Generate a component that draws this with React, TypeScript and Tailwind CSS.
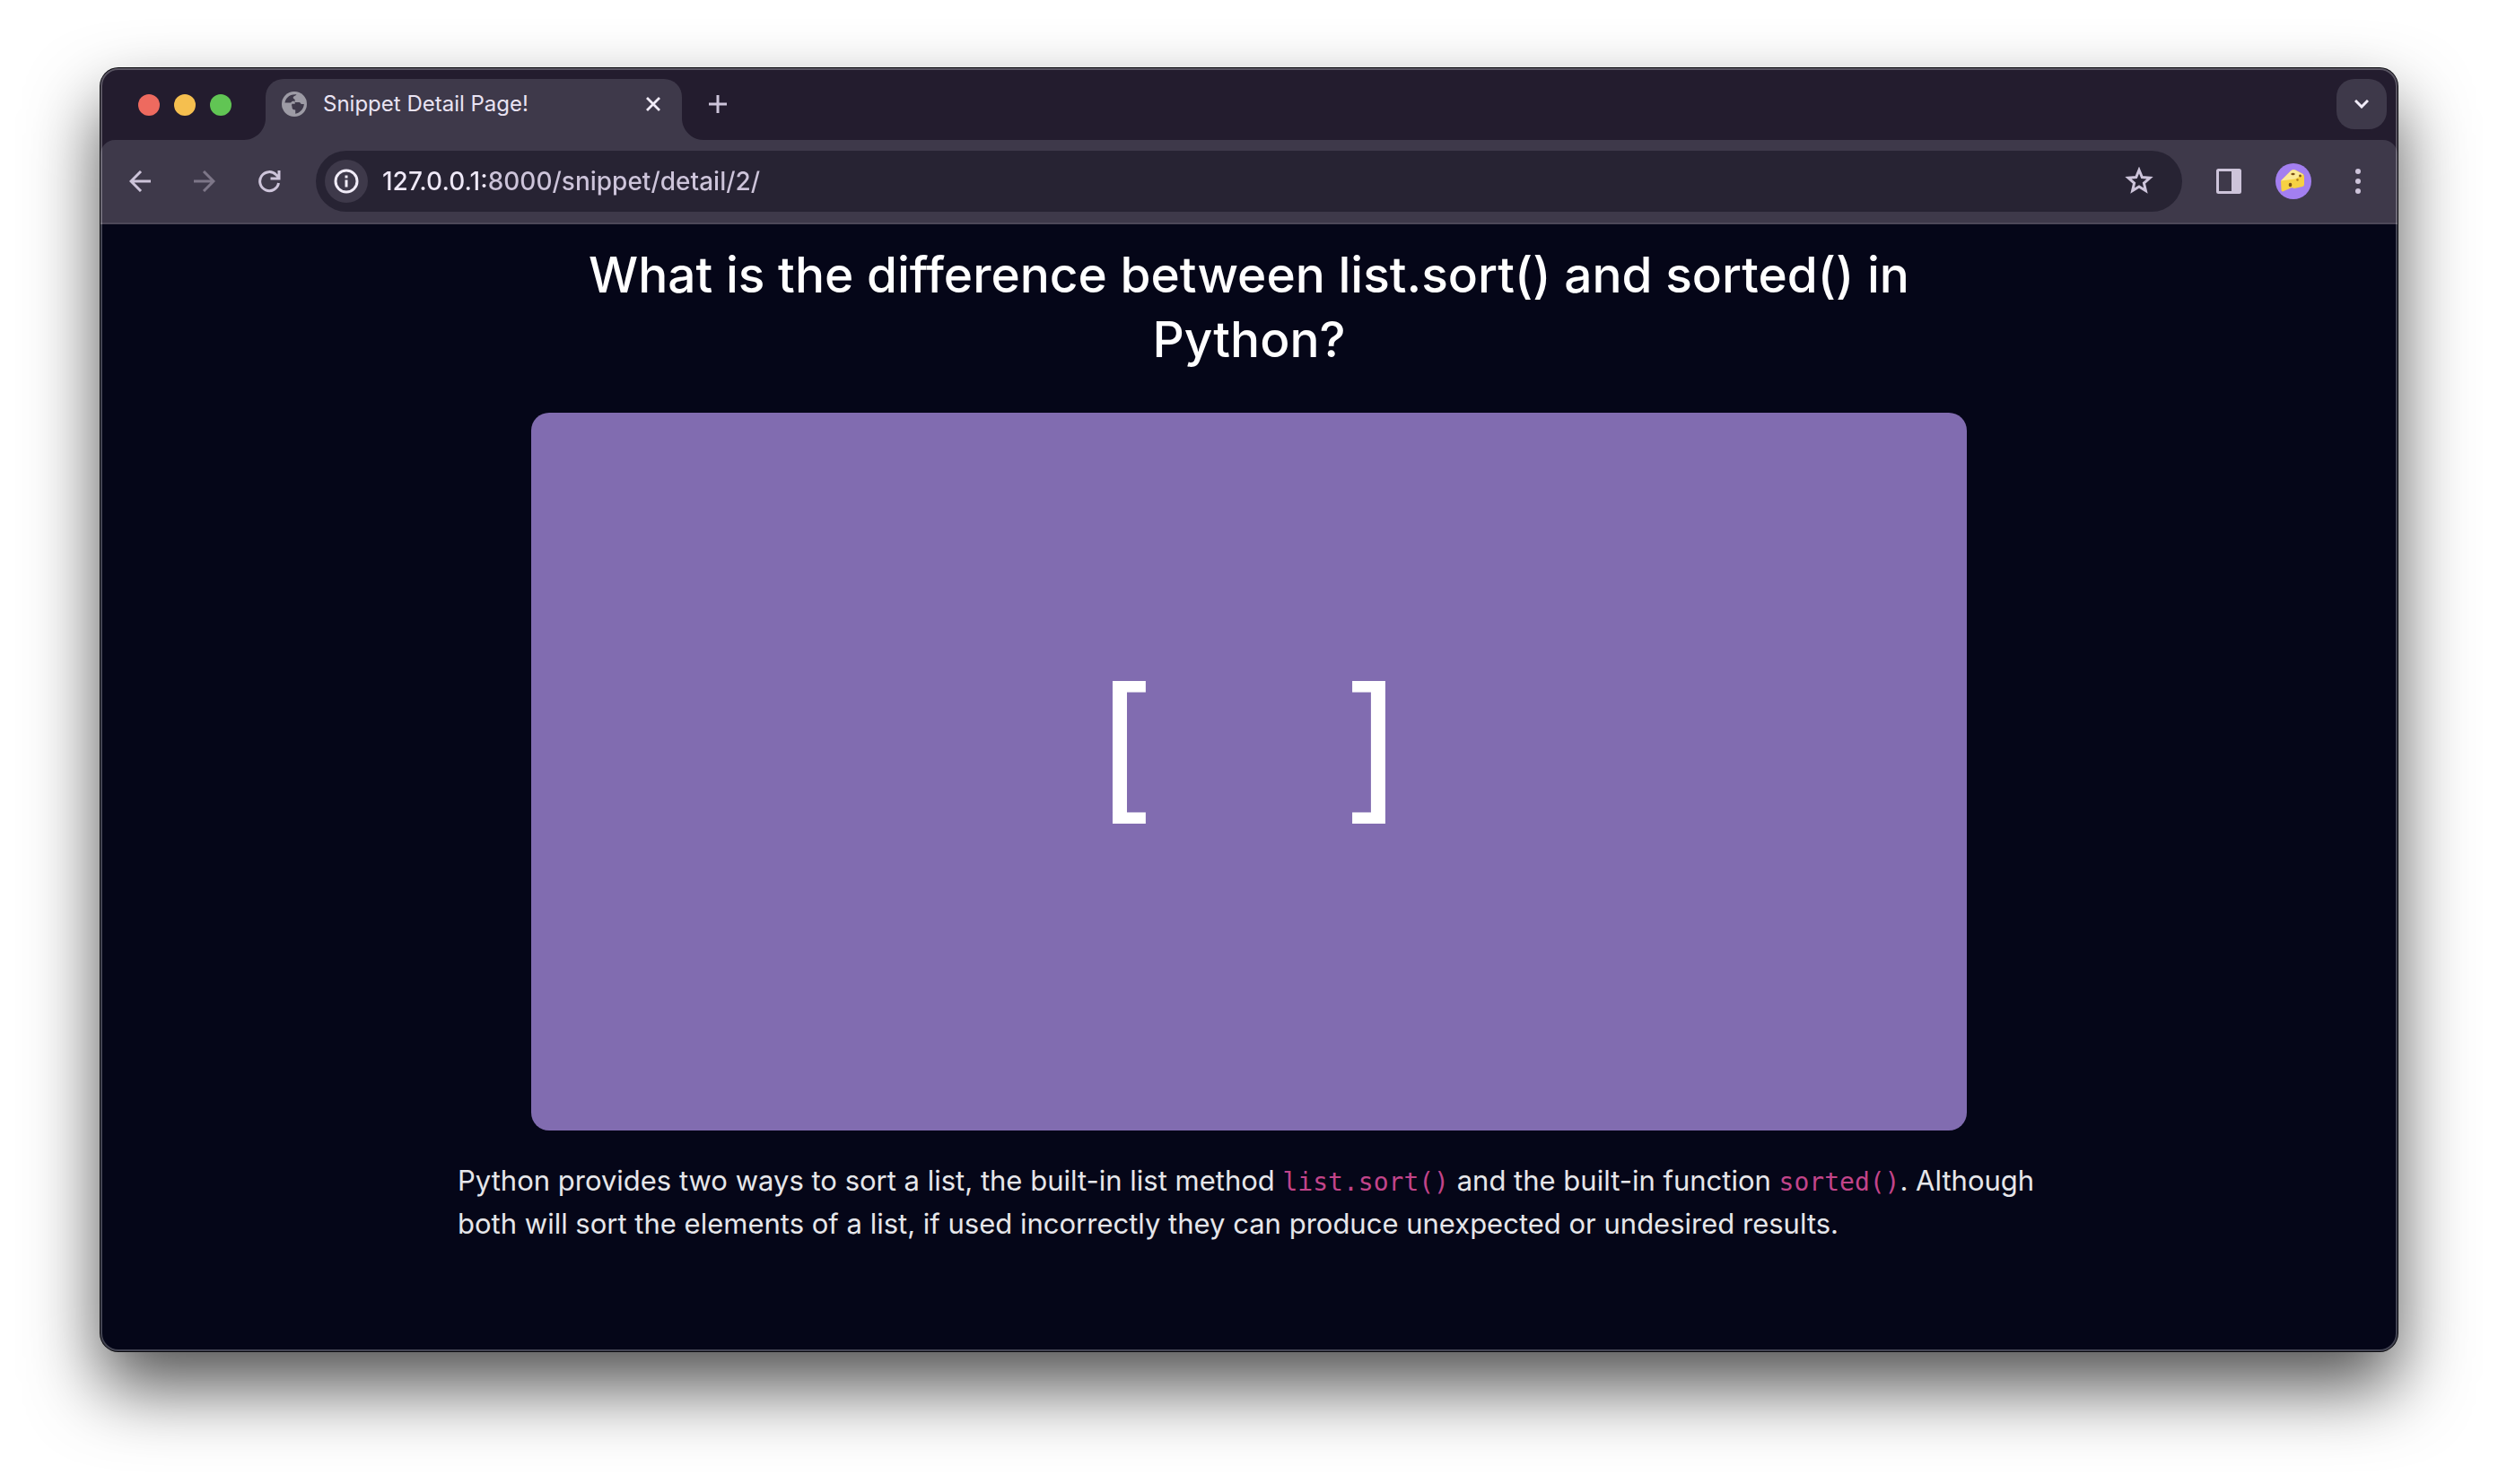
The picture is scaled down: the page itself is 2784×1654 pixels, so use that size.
import type { ReactNode } from "react";

const tools = "flex size-12 items-center justify-center rounded-full";

function IconButton({ label, children }: { label: string; children: ReactNode }) {
  return (
    <button type="button" aria-label={label} className={tools}>
      {children}
    </button>
  );
}

function GlobeIcon() {
  return (
    <svg viewBox="0 0 28 28" className="size-7 shrink-0" aria-hidden="true">
      <circle cx="14" cy="14" r="14" fill="#9d9ba5" />
      <path
        d="M16.500 3.300c-.6 1.700-3.800 1.500-3.800 3.700 0 1.600 2 1.100 2 2.600v2.400h4.500c1.800 0 1.800 2 3 2h2.600c-.2 5.500-4.400 9.800-9.600 10.700v-4.200c-2.600 0-3.700-1-3.700-3.200 0-1.700-.8-2.600-2.500-2.600H3.200C3.600 7.400 8.500 2.700 16.500 3.300z"
        fill="#3e394a"
      />
      <path d="M3 12.500h6.500c1.500 0 1.200-1.800 2.700-1.800h2.500v3h-3.500v2H3z" fill="#9d9ba5" />
    </svg>
  );
}

function CheeseIcon() {
  return (
    <svg viewBox="0 0 40 40" className="size-10" aria-hidden="true">
      <circle cx="20" cy="20" r="20" fill="#a37ff0" />
      <path d="M6 19.500 17 8.500q2-1.800 5-1l8 4q2 1 2 3v9q0 2-2 2.500l-9 2-3-1-3 1.500-7 3q-1.500 0-1.500-2z" fill="#f6d143" />
      <path d="M6 19.500 17 8.500q2-1.800 5-1l9 5-9 5z" fill="#fbe996" />
      <ellipse cx="19.500" cy="12" rx="2.200" ry="1.200" fill="#7a5014" />
      <circle cx="27.500" cy="14" r="1.400" fill="#7a5014" />
      <ellipse cx="16.500" cy="24" rx="1.800" ry="2.200" fill="#7a5014" />
      <circle cx="24.500" cy="18.500" r="1.200" fill="#a8741c" />
    </svg>
  );
}

function TabStrip() {
  return (
    <header className="flex h-20 items-end bg-[#231c2e] pr-3 pl-[42px]">
      <div className="flex h-[78px] items-center gap-4">
        <button type="button" aria-label="Close window" className="size-6 rounded-full bg-[#ee6a5f]" />
        <button type="button" aria-label="Minimise window" className="size-6 rounded-full bg-[#f5bf4f]" />
        <button type="button" aria-label="Zoom window" className="size-6 rounded-full bg-[#61c554]" />
      </div>
      <div className="ml-[14px] flex h-[68px] items-end">
        <svg viewBox="0 0 24 24" className="size-6 text-[#3e394a]" aria-hidden="true">
          <path d="M24 0v24H0C13 24 24 13 24 0z" fill="currentColor" />
        </svg>
        <div className="flex h-[68px] w-[464px] items-start rounded-t-[20px] bg-[#3e394a] pt-2 pr-2 pl-[18px]">
          <div className="flex h-10 flex-1 items-center gap-[18px]">
            <GlobeIcon />
            <span className="font-['Inter',sans-serif] text-[24px] leading-8 text-[#e9e3f3]">Snippet Detail Page!</span>
          </div>
          <button type="button" aria-label="Close tab" className="flex size-10 w-12 items-center justify-center">
            <svg viewBox="0 0 16 16" className="size-4" stroke="#f1ecf8" strokeWidth="2.800" aria-hidden="true">
              <path d="m1 1 14 14M15 1 1 15" />
            </svg>
          </button>
        </div>
        <svg viewBox="0 0 24 24" className="size-6 text-[#3e394a]" aria-hidden="true">
          <path d="M0 0v24h24C11 24 0 13 0 0z" fill="currentColor" />
        </svg>
      </div>
      <button type="button" aria-label="New tab" className="-ml-2 flex h-20 w-12 items-center justify-center">
        <svg viewBox="0 0 20 20" className="size-5" stroke="#cdc4da" strokeWidth="3" aria-hidden="true">
          <path d="M10 0v20M0 10h20" />
        </svg>
      </button>
      <button
        type="button"
        aria-label="Search tabs"
        className="mb-3 ml-auto flex size-14 items-center justify-center rounded-[20px] bg-[#3e394a]"
      >
        <svg viewBox="0 0 16 10" className="h-[10px] w-4" fill="none" stroke="#f1ecf8" strokeWidth="3" aria-hidden="true">
          <path d="m1 1 7 7 7-7" />
        </svg>
      </button>
    </header>
  );
}

function Toolbar() {
  return (
    <div className="bg-[#231c2e]">
      <nav
        aria-label="Browser toolbar"
        className="flex h-[94px] items-start rounded-t-2xl border-b-2 border-[#4d4858] bg-[#3e394a] px-5 pt-3"
      >
        <div className="flex h-[68px] items-center gap-6">
          <IconButton label="Back">
            <svg viewBox="0 0 24 24" className="size-6" fill="none" stroke="#cdc4da" strokeWidth="3" aria-hidden="true">
              <path d="M24 12H2M13 1 2 12l11 11" />
            </svg>
          </IconButton>
          <IconButton label="Forward">
            <svg viewBox="0 0 24 24" className="size-6" fill="none" stroke="#7d7688" strokeWidth="3" aria-hidden="true">
              <path d="M0 12h22M11 1l11 11-11 11" />
            </svg>
          </IconButton>
          <IconButton label="Reload">
            <svg viewBox="0 0 26 26" className="size-[26px]" fill="none" stroke="#cdc4da" strokeWidth="3" aria-hidden="true">
              <path d="M23.500 15a10.500 10.500 0 1 1-2.800-9.200L24 9M24 1v9h-9.500" />
            </svg>
          </IconButton>
        </div>
        <div className="ml-7 flex h-[68px] flex-1 items-center rounded-full bg-[#272333] pr-6 pl-[10px]">
          <button
            type="button"
            aria-label="View site information"
            className="flex size-12 items-center justify-center rounded-full bg-[#3e394a]"
          >
            <svg viewBox="0 0 28 28" className="size-7" fill="none" stroke="#f1ecf8" strokeWidth="3" aria-hidden="true">
              <circle cx="14" cy="14" r="12" />
              <path d="M14 12.500v8M14 7.500v3" />
            </svg>
          </button>
          <input
            aria-label="Address and search bar"
            defaultValue="127.0.0.1:8000/snippet/detail/2/"
            className="ml-4 min-w-0 flex-1 bg-[linear-gradient(90deg,#efe9f8_116px,#cdc4da_116px)] bg-clip-text font-['Inter',sans-serif] text-[28px] leading-10 font-medium text-transparent outline-none"
          />
          <IconButton label="Bookmark this tab">
            <svg viewBox="0 0 32 32" className="size-8" fill="none" stroke="#cdc4da" strokeWidth="3" aria-hidden="true">
              <path d="m16 3.500 3.300 8.100 8.700.7-6.600 5.700 2 8.500-7.400-4.500-7.400 4.500 2-8.500L4 12.300l8.700-.7z" />
            </svg>
          </IconButton>
        </div>
        <div className="ml-7 flex h-[68px] items-center gap-6">
          <IconButton label="Side panel">
            <svg viewBox="0 0 28 28" className="size-7" aria-hidden="true">
              <rect x="1.500" y="1.500" width="25" height="25" rx="1" fill="none" stroke="#cdc4da" strokeWidth="3" />
              <path d="M17 1h10v26H17z" fill="#cdc4da" />
            </svg>
          </IconButton>
          <IconButton label="Profile">
            <CheeseIcon />
          </IconButton>
          <IconButton label="More options">
            <svg viewBox="0 0 8 28" className="h-7 w-2" fill="#cdc4da" aria-hidden="true">
              <circle cx="4" cy="3" r="3" />
              <circle cx="4" cy="14" r="3" />
              <circle cx="4" cy="25" r="3" />
            </svg>
          </IconButton>
        </div>
      </nav>
    </div>
  );
}

function Code({ children }: { children: ReactNode }) {
  return (
    <code className="font-['DejaVu_Sans_Mono',monospace] text-[28px] leading-none text-[#c2448a]">{children}</code>
  );
}

function SnippetPage() {
  return (
    <main className="px-12 pt-5 pb-[118px] font-['Inter',sans-serif]">
      <div className="mx-auto max-w-[1764px]">
        <h1 className="mx-auto max-w-[1600px] text-center text-[55px] leading-[72px] font-medium text-white">
          What is the difference between list.sort() and sorted() in Python?
        </h1>
        <div className="mx-auto mt-[46px] flex aspect-[2/1] max-w-[1600px] items-center justify-center gap-[170px] rounded-[20px] bg-[#816cb0] pb-[52px] font-['DejaVu_Sans_Mono',monospace] text-[178px] leading-none text-white">
          <span>[</span>
          <span>]</span>
        </div>
        <p className="mt-8 text-[31px] leading-[48px] text-[#e6e6ea]">
          Python provides two ways to sort a list, the built-in list method <Code>list.sort()</Code> and the built-in
          function <Code>sorted()</Code>. Although both will sort the elements of a list, if used incorrectly they can
          produce unexpected or undesired results.
        </p>
      </div>
    </main>
  );
}

export default function App() {
  return (
    <div className="min-h-screen overflow-hidden bg-white px-28 pt-19 pb-[148px]">
      <div className="relative rounded-[20px] bg-[#050618] shadow-[0_0_0_1px_#08080c,0_40px_80px_rgba(0,0,0,0.68)]">
        <div className="overflow-hidden rounded-[20px]">
          <TabStrip />
          <Toolbar />
          <SnippetPage />
        </div>
        <div className="pointer-events-none absolute inset-0 rounded-[20px] border-2 border-white/25" />
      </div>
    </div>
  );
}
